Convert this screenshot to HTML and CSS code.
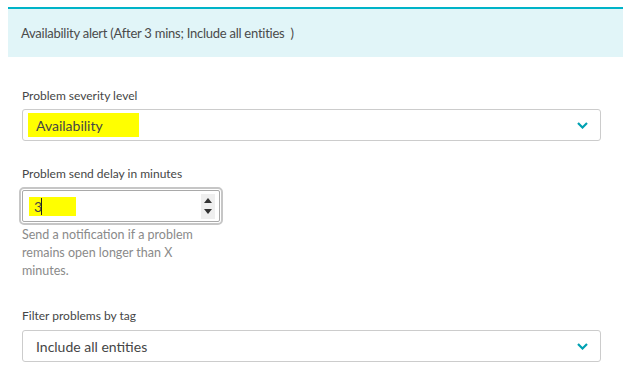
FILE: index.html
```html
<!DOCTYPE html>
<html lang="en">
<head>
    <meta charset="UTF-8">
    <title>Alerting profile</title>
    <link rel="stylesheet" href="styles.css">
</head>
<body>

    <div class="rule-header">Availability alert (After 3 mins; Include all entities &nbsp;)</div>

    <div class="rule-body">
        <div class="form-group">
            <label>Problem severity level</label>
            <div class="select-box">
                <span class="marked marked-wide">Availability</span>
                <svg class="chevron" width="11" height="7" viewBox="0 0 11 7"><path d="M1 1 L5.5 5.5 L10 1" fill="none" stroke="#00a1b2" stroke-width="2.2"/></svg>
            </div>
        </div>

        <div class="form-group">
            <label>Problem send delay in minutes</label>
            <div class="number-box">
                <span class="marked marked-num">3<span class="caret"></span></span>
                <div class="spinner">
                    <svg width="8" height="5" viewBox="0 0 8 5"><path d="M0 5 L4 0 L8 5 Z" fill="#333"/></svg>
                    <svg width="8" height="5" viewBox="0 0 8 5"><path d="M0 0 L4 5 L8 0 Z" fill="#333"/></svg>
                </div>
            </div>
            <p class="hint">Send a notification if a problem remains open longer than X minutes.</p>
        </div>

        <div class="form-group">
            <label>Filter problems by tag</label>
            <div class="select-box">
                <span class="value">Include all entities</span>
                <svg class="chevron" width="11" height="7" viewBox="0 0 11 7"><path d="M1 1 L5.5 5.5 L10 1" fill="none" stroke="#00a1b2" stroke-width="2.2"/></svg>
            </div>
        </div>
    </div>

</body>
</html>
```

FILE: styles.css
```css
body {
    font-family: 'Lato', sans-serif;
    background: #ffffff;
    margin: 0;
    padding: 0;
    color: #454646;
}

.rule-header {
    margin: 7px 0 0 8px;
    height: 48px;
    border-top: 2px solid #00b4c8;
    background: #e1f5f8;
    padding-left: 13px;
    display: flex;
    align-items: center;
    font-size: 13px;
    letter-spacing: -0.25px;
    color: #4a4a4a;
}

.rule-body {
    padding: 31px 22px 0 22px;
}

.form-group {
    margin-bottom: 25px;
}

.form-group:nth-child(2) {
    margin-bottom: 28px;
}

label {
    display: block;
    font-size: 12px;
    line-height: 16px;
    margin-bottom: 5px;
    color: #454646;
}

.form-group:last-child label {
    margin-bottom: 6px;
}

.select-box {
    height: 30px;
    border: 1px solid #cccccc;
    border-radius: 3px;
    display: flex;
    align-items: center;
    justify-content: space-between;
    padding: 0 12px 0 12px;
    font-size: 14px;
    color: #454646;
}

.value {
    margin-left: 1px;
}

.marked {
    background: #ffff00;
}

.marked-wide {
    margin-left: -7px;
    padding: 4px 36px 3px 8px;
}

.chevron {
    display: block;
}

.number-box {
    width: 198px;
    height: 32px;
    margin-top: 8px;
    border: 1px solid #a9a9a9;
    border-radius: 2px;
    outline: 2px solid #c6c6c6;
    outline-offset: 1px;
    box-sizing: border-box;
    display: flex;
    align-items: center;
    justify-content: space-between;
    padding: 0 4px 0 6px;
    font-size: 14px;
    color: #454646;
}

.marked-num {
    padding: 1px 34px 1px 5px;
    position: relative;
}

.caret {
    position: absolute;
    left: 12px;
    top: 1px;
    width: 1px;
    height: 17px;
    background: #222;
}

.spinner {
    width: 14px;
    height: 25px;
    background: #efefef;
    display: flex;
    flex-direction: column;
    align-items: center;
    justify-content: space-around;
    padding: 2px 0;
    box-sizing: border-box;
}

.spinner svg {
    display: block;
}

.hint {
    width: 190px;
    margin: 4px 0 0 0;
    font-size: 12.5px;
    line-height: 18px;
    color: #8a8a8a;
}
```
